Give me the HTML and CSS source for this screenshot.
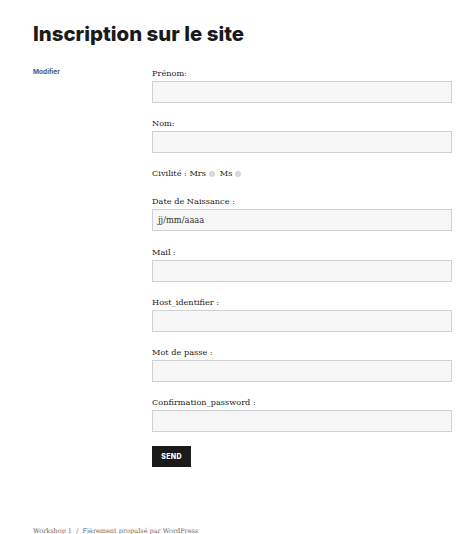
FILE: index.html
```html
<!DOCTYPE html>
<html lang="fr">
<head>
<meta charset="utf-8">
<title>Inscription sur le site</title>
<link rel="stylesheet" href="styles.css">
</head>
<body>
<div class="page">
  <h1 class="title">Inscription sur le site</h1>
  <div class="main">
    <aside class="side"><a class="edit" href="#">Modifier</a></aside>
    <form class="form">
      <div class="field"><label>Prénom:</label><input class="box" type="text"></div>
      <div class="field"><label>Nom:</label><input class="box" type="text"></div>
      <div class="field civ">Civilité : Mrs <span class="radio"></span> &nbsp;Ms <span class="radio"></span></div>
      <div class="field dob"><label>Date de Naissance :</label><div class="box date">jj/mm/aaaa</div></div>
      <div class="field"><label>Mail :</label><input class="box" type="text"></div>
      <div class="field"><label>Host_identifier :</label><input class="box" type="text"></div>
      <div class="field"><label>Mot de passe :</label><input class="box" type="password"></div>
      <div class="field"><label>Confirmation_password :</label><input class="box" type="password"></div>
      <button class="send" type="button">SEND</button>
    </form>
  </div>
  <footer class="foot">Workshop 1 &nbsp;/&nbsp; Fièrement propulsé par WordPress</footer>
</div>
</body>
</html>
```
FILE: styles.css
```css
html, body { margin: 0; padding: 0; background: #fff; }
body { font-family: "DejaVu Serif", serif; color: #1a1a1a; }
.page { padding: 20px 20px 0 33px; }
.title {
  font-family: "Inter", "Liberation Sans", sans-serif;
  font-weight: 800;
  font-size: 20.4px;
  line-height: 28px;
  margin: 0 0 20px 0;
  color: #1a1a1a;
}
.main { display: flex; }
.side { width: 119px; flex: none; }
.edit {
  font-family: "Inter", "Liberation Sans", sans-serif;
  font-weight: 700;
  font-size: 6.5px;
  color: #4a5a6c;
  text-decoration: none;
  line-height: 8px;
  display: block;
}
.form { width: 300px; display: flex; flex-direction: column; }
.field { display: flex; flex-direction: column; margin-bottom: 15px; }
.field.dob { margin-bottom: 16px; }
.field label { font-size: 8.2px; line-height: 11px; margin-bottom: 2px; display: block; }
.box {
  box-sizing: border-box;
  height: 22px;
  width: 300px;
  border: 1px solid #d1d1d1;
  background: #f7f7f7;
  margin: 0;
  padding: 0 5px;
  font-family: "DejaVu Serif", serif;
  font-size: 8.3px;
  color: #333;
}
.date { display: flex; align-items: center; }
.civ { font-size: 8.2px; line-height: 11px; display: block; margin-bottom: 17px; }
.radio {
  display: inline-block;
  width: 6px; height: 6px;
  border-radius: 50%;
  background: #dcdcdc;
  border: 1px solid #cfcfcf;
  box-sizing: border-box;
  vertical-align: -1px;
}
.send {
  align-self: flex-start;
  width: 39px; height: 21px;
  margin-top: -1px;
  background: #1a1a1a;
  color: #fff;
  border: 0;
  padding: 0;
  font-family: "Inter", "Liberation Sans", sans-serif;
  font-weight: 800;
  font-size: 7px;
  letter-spacing: 0.3px;
}
.foot {
  margin-top: 59px;
  font-size: 6.5px;
  color: #686868;
  line-height: 10px;
}
```
